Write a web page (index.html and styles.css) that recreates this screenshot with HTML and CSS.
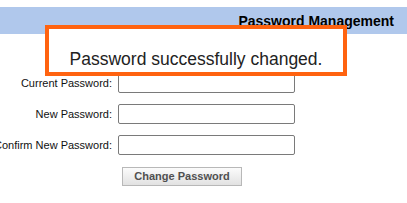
FILE: index.html
```html
<!DOCTYPE html>
<html>
<head>
    <title>Password Management</title>
    <meta charset="UTF-8">
    <link rel="stylesheet" href="styles.css">
</head>
<body>
  <div class="titlebar">Password Management</div>

  <form class="pwform">
    <label for="current">Current Password:</label>
    <input type="password" id="current" name="current">

    <label for="newpw">New Password:</label>
    <input type="password" id="newpw" name="newpw">

    <label for="confirm">Confirm New Password:</label>
    <input type="password" id="confirm" name="confirm">

    <span></span>
    <div><button type="submit">Change Password</button></div>
  </form>

  <div class="notice">Password successfully changed.</div>
</body>
</html>
```

FILE: styles.css
```css
body {
  font-family: Arial, "Liberation Sans", sans-serif;
  margin: 0;
  padding: 0;
  background-color: #ffffff;
  color: #111111;
  position: relative;
  overflow: hidden;
}
.titlebar {
  margin-top: 7px;
  height: 27px;
  background: #b0c8ec;
  text-align: right;
  font-size: 14px;
  font-weight: bold;
  padding-right: 13px;
  color: #000000;
  box-sizing: border-box;
  padding-top: 3px;
  line-height: 22px;
}
.pwform {
  display: grid;
  grid-template-columns: 112px 177px;
  column-gap: 6px;
  row-gap: 11px;
  margin-top: 39px;
  align-items: center;
}
.pwform label {
  font-size: 11px;
  white-space: nowrap;
  justify-self: end;
}
.pwform input {
  width: 177px;
  height: 20px;
  box-sizing: border-box;
  border: 1px solid #7a7a7a;
  border-radius: 2px;
  padding: 2px 4px;
  margin: 0;
}
.pwform button {
  margin: -1px 0 0 4px;
  width: 120px;
  height: 19px;
  background: linear-gradient(#fbfbfb, #e2e2e2);
  border: 1px solid #b8b8b8;
  color: #505050;
  font-family: Arial, "Liberation Sans", sans-serif;
  font-size: 11px;
  font-weight: bold;
  padding: 0;
}
.notice {
  position: absolute;
  left: 45px;
  top: 25px;
  width: 302px;
  height: 51px;
  box-sizing: border-box;
  border: 4px solid #ff6310;
  background: #ffffff;
  text-align: center;
  font-size: 17.5px;
  color: #222222;
  padding-top: 20px;
}
```
